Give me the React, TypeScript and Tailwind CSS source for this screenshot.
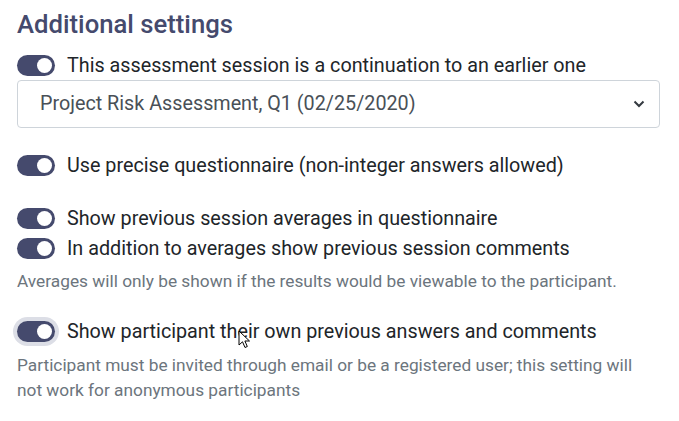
import { useState } from "react";

function Toggle({ on, focused }: { on: boolean; focused?: boolean }) {
  return (
    <span
      className={
        "relative inline-flex h-[21px] w-[38px] shrink-0 items-center rounded-full bg-[#454a6d] " +
        (focused ? "ring-4 ring-[#dcdee6]" : "")
      }
    >
      <span
        className={
          "absolute h-[15px] w-[15px] rounded-full bg-white " + (on ? "left-[20px]" : "left-[3px]")
        }
      />
    </span>
  );
}

function Row({ label, focused, className }: { label: string; focused?: boolean; className?: string }) {
  const [on, setOn] = useState(true);
  return (
    <label
      className={"flex cursor-pointer items-center gap-3 text-[19.75px] leading-[27px] text-[#212529] " + (className ?? "")}
      onClick={() => setOn(!on)}
    >
      <Toggle on={on} focused={focused} />
      <span>{label}</span>
    </label>
  );
}

export default function App() {
  return (
    <div
      className="relative min-h-screen bg-white px-[17px] pt-[9px]"
      style={{ fontFamily: "Roboto, 'Liberation Sans', sans-serif" }}
    >
      <h2 className="text-[25.7px] font-medium leading-[30px] text-[#454a6d]">Additional settings</h2>

      <Row className="mt-[13px]" label="This assessment session is a continuation to an earlier one" />
      <div className="mt-[1px] flex h-[48px] w-[643px] items-center justify-between rounded-[4px] border border-[#ced4da] pl-[22px] pr-[14px] text-[19.75px] text-[#495057]">
        <span>Project Risk Assessment, Q1 (02/25/2020)</span>
        <svg width="12" height="8" viewBox="0 0 12 8" fill="none">
          <path d="M1.5 1.5L6 6L10.5 1.5" stroke="#343a40" strokeWidth="2" />
        </svg>
      </div>

      <Row className="mt-[24px]" label="Use precise questionnaire (non-integer answers allowed)" />

      <Row className="mt-[26px]" label="Show previous session averages in questionnaire" />
      <Row className="mt-[3px]" label="In addition to averages show previous session comments" />
      <p className="mt-[8px] text-[17.3px] leading-[22px] text-[#6c757d]">
        Averages will only be shown if the results would be viewable to the participant.
      </p>

      <Row className="mt-[26px]" focused label="Show participant their own previous answers and comments" />
      <p className="mt-[8px] w-[630px] text-[17.3px] leading-[25px] text-[#6c757d]">
        Participant must be invited through email or be a registered user; this setting will not work for
        anonymous participants
      </p>

      <svg
        className="pointer-events-none absolute left-[238px] top-[330px]"
        width="13"
        height="19"
        viewBox="0 0 13 19"
      >
        <path d="M1 1L1 15L4.5 11.8L7 17.5L9.3 16.5L6.9 11H11.5Z" fill="white" stroke="black" strokeWidth="1" />
      </svg>
    </div>
  );
}
